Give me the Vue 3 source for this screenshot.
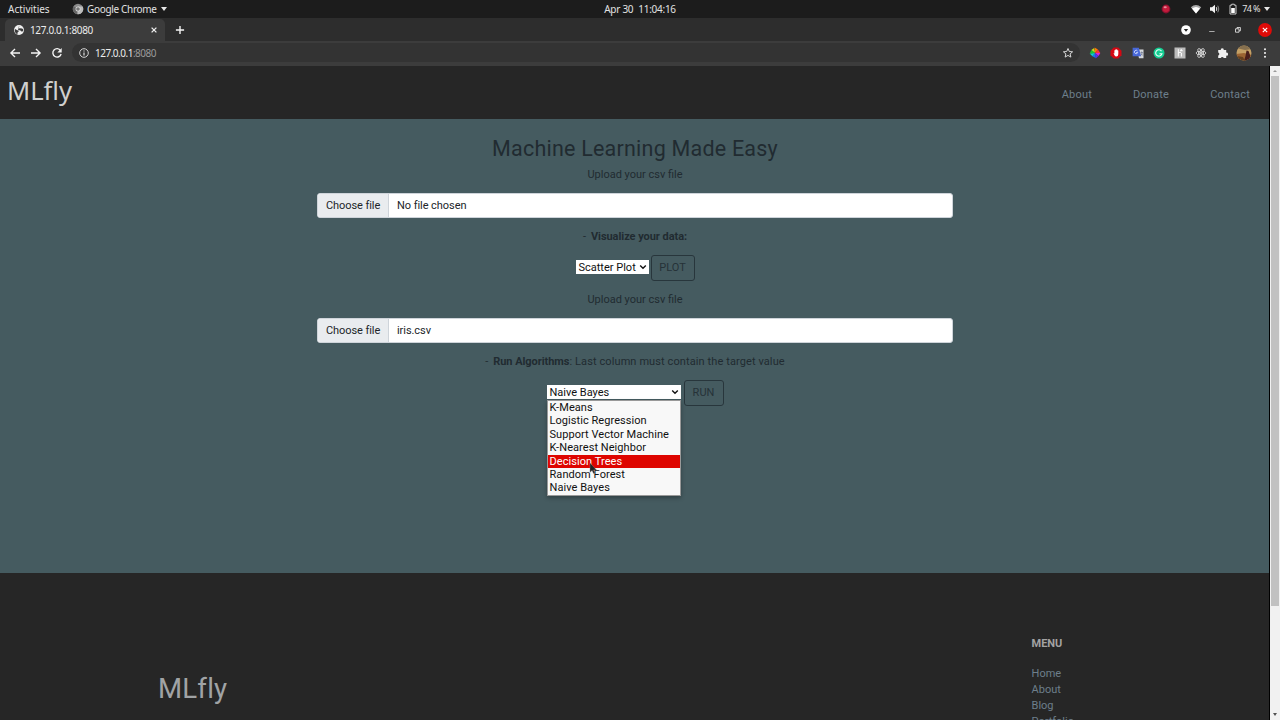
<script setup>
import {ref} from "vue"

const navLinks = ["About", "Donate", "Contact"]
const menuLinks = ["Home", "About", "Blog", "Portfolio"]

const algorithms = [
  "K-Means",
  "Logistic Regression",
  "Support Vector Machine",
  "K-Nearest Neighbor",
  "Decision Trees",
  "Random Forest",
  "Naive Bayes",
]

const selected = ref("Naive Bayes")
const hovered = ref("Decision Trees")
</script>

<template>
  <div class="desktop">
    <header class="topbar">
      <div class="topbar__left">
        <span class="topbar__activities">Activities</span>
        <svg class="topbar__chrome" viewBox="0 0 12 12">
          <circle cx="6" cy="6" r="5.2" fill="#8b8b8b"/>
          <path d="M6 6L1.5 3.3A5.2 5.2 0 0 0 5 11.1z" fill="#666"/>
          <path d="M6 3.5h4.6A5.2 5.2 0 0 1 5.5 11.2z" fill="#bcbcbc"/>
          <circle cx="6" cy="6" r="2.5" fill="#ddd"/>
          <circle cx="6" cy="6" r="1.8" fill="#777"/>
        </svg>
        <span class="topbar__app">Google Chrome</span>
        <i class="caret"></i>
      </div>
      <div class="topbar__clock"><span>Apr 30</span><span>11:04:16</span></div>
      <div class="topbar__right">
        <svg class="topbar__record" viewBox="0 0 10 10">
          <circle cx="5" cy="5" r="4.4" fill="#8c1230"/>
          <circle cx="5" cy="4.8" r="3.2" fill="#c41c3c"/>
          <ellipse cx="4.2" cy="3.2" rx="1.6" ry="1" fill="#e58a98"/>
        </svg>
        <svg class="topbar__wifi" viewBox="0 0 12 10">
          <path d="M.8 3.2Q6-1 11.2 3.2L6 9.4z" fill="#aaa"/>
          <path d="M2 4.6Q6 1.6 10 4.6L6 9.4z" fill="#fff"/>
        </svg>
        <svg class="topbar__sound" viewBox="0 0 12 10">
          <path d="M1 3.2h2L6 .8v8.4L3 6.8H1z" fill="#f2f2f2"/>
          <path d="M7.3 3.2q1 1.8 0 3.6" fill="none" stroke="#eee" stroke-width="1"/>
          <path d="M8.8 1.7q2 3.3 0 6.6" fill="none" stroke="#999" stroke-width=".9"/>
        </svg>
        <svg class="topbar__battery" viewBox="0 0 8 12">
          <path d="M2.7 1.2h2.6v1H7v8.8H1V2.2h1.7z" fill="none" stroke="#ddd" stroke-width=".9"/>
          <path d="M2.2 5h3.6v5H2.2z" fill="#fff"/>
        </svg>
        <span class="topbar__percent">74 %</span>
        <i class="caret"></i>
      </div>
    </header>

    <div class="tabs">
      <div class="tab">
        <svg class="tab__globe" viewBox="0 0 12 12">
          <circle cx="6" cy="6" r="4.9" fill="#f1f1f1"/>
          <path d="M2 5l2.4 1.3 1.2.2v1.2L4.5 8.6v1.7C2.2 9.6 1.4 7.2 2 5z" fill="#3c3c3c"/>
          <path d="M6.3 2L5.4 3.3l1.2 1.2 1.4-.3 2 .9.1 2.1-1.7.3-1.3-1.3H5.8l-.9-1 1-1.2z" fill="#3c3c3c"/>
        </svg>
        <span class="tab__title">127.0.0.1:8080</span>
        <svg class="tab__close" viewBox="0 0 8 8"><path d="M1.6 1.6l4.8 4.8M6.4 1.6L1.6 6.4" stroke="#eee" stroke-width="1.3"/></svg>
      </div>
      <svg class="tabs__new" viewBox="0 0 10 10"><path d="M5 .9v8.2M.9 5h8.2" stroke="#f3f3f3" stroke-width="1.4"/></svg>
      <div class="window-buttons">
        <svg class="window-buttons__menu" viewBox="0 0 10 10">
          <circle cx="5" cy="5" r="4.8" fill="#fff"/>
          <path d="M2.8 3.9h4.4L5 6.7z" fill="#222"/>
        </svg>
        <svg class="window-buttons__min" viewBox="0 0 8 8"><path d="M1.2 5.5h5.4" stroke="#aaa" stroke-width="1"/></svg>
        <svg class="window-buttons__max" viewBox="0 0 8 8">
          <path d="M1.5 2.8h3.5v3.4H1.5zM3 2.8V1.5h3.4v3.3H5" fill="none" stroke="#ddd" stroke-width=".9"/>
        </svg>
        <svg class="window-buttons__close" viewBox="0 0 14 14">
          <circle cx="7" cy="7" r="6.9" fill="#e00b08"/>
          <path d="M4.8 4.8l4.4 4.4M9.2 4.8L4.8 9.2" stroke="#fff" stroke-width="1.1"/>
        </svg>
      </div>
    </div>

    <div class="toolbar">
      <svg class="toolbar__nav" viewBox="0 0 12 12"><path d="M11 6H2M6 1.9L1.9 6 6 10.1" fill="none" stroke="#f3f3f3" stroke-width="1.35"/></svg>
      <svg class="toolbar__nav" viewBox="0 0 12 12"><path d="M1 6h9M6 1.9L10.1 6 6 10.1" fill="none" stroke="#f3f3f3" stroke-width="1.35"/></svg>
      <svg class="toolbar__nav" viewBox="0 0 12 12">
        <path d="M9.6 3.6A4.2 4.2 0 1 0 10.1 7" fill="none" stroke="#f3f3f3" stroke-width="1.4"/>
        <path d="M10.7 1v4.4H6.3z" fill="#f3f3f3"/>
      </svg>
      <div class="address">
        <svg class="address__info" viewBox="0 0 10 10">
          <circle cx="5" cy="5" r="4.3" fill="none" stroke="#ddd" stroke-width=".95"/>
          <path d="M5 4.5v3M5 2.5v1.1" stroke="#eee" stroke-width="1.1"/>
        </svg>
        <span class="address__url">127.0.0.1<span class="address__port">:8080</span></span>
        <svg class="address__star" viewBox="0 0 12 12">
          <path d="M6 1.5l1.3 3 3.3.3-2.5 2.1.8 3.2L6 8.4l-2.9 1.7.8-3.2-2.5-2.1 3.3-.3z" fill="none" stroke="#ddd" stroke-width=".95"/>
        </svg>
      </div>
      <div class="extensions">
        <svg viewBox="0 0 12 12">
          <path d="M6 6L5.2 1 2.4 2.9z" fill="#c8e020"/>
          <path d="M6 6L5.6.6l3.3 2z" fill="#ff7a00"/>
          <path d="M6 6l2.9-3.6L11.3 6z" fill="#f33"/>
          <path d="M6 6h5.3L9.5 9z" fill="#d523dc"/>
          <path d="M6 6l3.5 3L6.7 11.4z" fill="#5732ee"/>
          <path d="M6 6l.7 5L3.4 9.3z" fill="#1774f5"/>
          <path d="M6 6L3.4 9.3.7 6.4z" fill="#0bd3cf"/>
          <path d="M6 6L.7 6.4l1.7-3.5z" fill="#19c733"/>
        </svg>
        <svg viewBox="0 0 12 12">
          <path d="M3.7.5h4.6l3.2 3.2v4.6l-3.2 3.2H3.7L.5 8.3V3.7z" fill="#d40813"/>
          <path d="M3.5 6.1l.9.4V3.2h.8V2.5H6v-.3h.8v.6h.8v.7h.7v3.7Q8.2 9.4 6.4 9.5 5 9.5 4.3 8z" fill="#fff"/>
        </svg>
        <svg viewBox="0 0 12 12">
          <path d="M5 2.6h6.5v8.7H7z" fill="#d5d8dc"/>
          <path d="M.6.8h6.2l2.3 8.5H.6z" fill="#4767d8"/>
          <path d="M5.5 4a1.7 1.7 0 1 0 .2 1.5H4.2" fill="none" stroke="#d7e1ff" stroke-width=".85"/>
          <path d="M8.5 5.5h2.3M9.6 4.5v1M10.3 5.6Q9.9 7.8 8.7 8.6M9 6.5l1.7 2" fill="none" stroke="#5c6782" stroke-width=".6"/>
        </svg>
        <svg viewBox="0 0 12 12">
          <circle cx="6" cy="6" r="5.5" fill="#13ce92"/>
          <path d="M8.5 4.1A3.2 3.2 0 1 0 9 6.7H6.4" fill="none" stroke="#eafff8" stroke-width="1.1"/>
        </svg>
        <svg viewBox="0 0 12 12">
          <path d="M.5.5h11v11H.5z" fill="#bcbcbc"/>
          <path d="M4.3 2.2v7.3M4.3 6Q6.3 4.4 7.4 6v3.5M7.2 2v2M5.9 3.7h2.8" fill="none" stroke="#fff" stroke-width="1"/>
        </svg>
        <svg viewBox="0 0 12 12">
          <g fill="none" stroke="#ddd" stroke-width=".85">
            <ellipse cx="6" cy="6" rx="5" ry="1.9"/>
            <ellipse cx="6" cy="6" rx="5" ry="1.9" transform="rotate(60 6 6)"/>
            <ellipse cx="6" cy="6" rx="5" ry="1.9" transform="rotate(120 6 6)"/>
          </g>
          <circle cx="6" cy="6" r="1" fill="#eee"/>
        </svg>
        <svg viewBox="0 0 12 12">
          <path d="M1.2 3.1h2.6a1.5 1.5 0 1 1 2.9 0h2.5v2.6a1.5 1.5 0 1 1 0 2.9v2.5H6.7a1.5 1.5 0 0 0-2.9 0H1.2V8.5a1.5 1.5 0 0 0 0-2.9z" fill="#f1f1f1"/>
        </svg>
      </div>
      <svg class="toolbar__avatar" viewBox="0 0 16 16">
        <defs><clipPath id="face"><circle cx="8" cy="8" r="7.5"/></clipPath></defs>
        <g clip-path="url(#face)">
          <path d="M0 0h16v16H0z" fill="#c4a065"/>
          <path d="M0 0h16v4L9 5 0 3z" fill="#86704f"/>
          <path d="M0 9l8-1 8 2v6H0z" fill="#9c6432"/>
          <path d="M10.5 5.5l2 .5 1.5 4 1 6H8l1.5-5z" fill="#4a1f1b"/>
          <path d="M1 11l6 1 2 4H2z" fill="#65401f"/>
        </g>
      </svg>
      <svg class="toolbar__more" viewBox="0 0 4 12">
        <circle cx="2" cy="2.2" r="1.05" fill="#eee"/>
        <circle cx="2" cy="6" r="1.05" fill="#eee"/>
        <circle cx="2" cy="9.8" r="1.05" fill="#eee"/>
      </svg>
    </div>

    <div class="viewport">
      <div class="page">
        <nav class="navbar">
          <a class="navbar__brand">MLfly</a>
          <ul class="navbar__links">
            <li v-for="link in navLinks" :key="link">{{ link }}</li>
          </ul>
        </nav>

        <main class="main">
          <h2 class="main__title">Machine Learning Made Easy</h2>
          <p class="main__upload">Upload your csv file</p>
          <div class="file">
            <span class="file__button">Choose file</span>
            <span class="file__name">No file chosen</span>
          </div>
          <p class="main__hint">- <b>Visualize your data:</b></p>
          <div class="action">
            <div class="select select--plot">
              <span>Scatter Plot</span>
              <svg viewBox="0 0 8 6"><path d="M1.2 1.5L4 4.2l2.8-2.7" fill="none" stroke="#111" stroke-width="1.4"/></svg>
            </div>
            <button class="btn btn--plot">PLOT</button>
          </div>

          <p class="main__upload">Upload your csv file</p>
          <div class="file">
            <span class="file__button">Choose file</span>
            <span class="file__name">iris.csv</span>
          </div>
          <p class="main__hint">- <b>Run Algorithms</b>: Last column must contain the target value</p>
          <div class="action">
            <div class="select select--run">
              <span>{{ selected }}</span>
              <svg viewBox="0 0 8 6"><path d="M1.2 1.5L4 4.2l2.8-2.7" fill="none" stroke="#111" stroke-width="1.4"/></svg>
              <ul class="options">
                <li
                  v-for="item in algorithms"
                  :key="item"
                  :class="{'options__item--active': item === hovered}"
                  class="options__item"
                  @mouseenter="hovered = item"
                  @click="selected = item"
                >{{ item }}</li>
              </ul>
              <svg class="cursor" viewBox="0 0 9 13">
                <path d="M1 1v9.3l2.1-1.9 1.4 3.2 1.5-.7-1.4-3h2.9z" fill="#222" stroke="#888" stroke-width=".4"/>
              </svg>
            </div>
            <button class="btn btn--run">RUN</button>
          </div>
        </main>

        <footer class="footer">
          <div class="footer__brand">MLfly</div>
          <div class="footer__menu">
            <h6>MENU</h6>
            <ul>
              <li v-for="link in menuLinks" :key="link">{{ link }}</li>
            </ul>
          </div>
        </footer>
      </div>

      <div class="scrollbar">
        <i class="scrollbar__up"></i>
        <div class="scrollbar__thumb"></div>
        <i class="scrollbar__down"></i>
      </div>
    </div>
  </div>
</template>

<style>
body {
  margin: 0;
  overflow: hidden;
}
</style>

<style scoped>
* {
  box-sizing: border-box;
}

svg {
  display: block;
  flex: none;
}

ul, p, h2, h6 {
  margin: 0;
  padding: 0;
  list-style: none;
}

.desktop {
  display: flex;
  flex-direction: column;
  width: 1280px;
  height: 720px;
  overflow: hidden;
  background: #262626;
  font-family: Roboto, "Liberation Sans", sans-serif;
  font-size: 11px;
  line-height: 16px;
  white-space: nowrap;
}

.topbar {
  display: grid;
  grid-template-columns: 1fr auto 1fr;
  align-items: center;
  flex: none;
  height: 18px;
  padding: 0 10px 0 8px;
  background: #1c1c1c;
  color: #e2e2e2;
  font-family: "Noto Sans", sans-serif;
  font-size: 10px;
}

.topbar__left, .topbar__right, .topbar__clock {
  display: flex;
  align-items: center;
}

.topbar__right {
  justify-content: flex-end;
}

.topbar__clock {
  gap: 5px;
  padding-left: 2px;
  letter-spacing: -0.27px;
}

.topbar__activities {
  width: 64px;
}

.topbar__chrome {
  width: 12px;
  height: 12px;
  margin-right: 3px;
}

.topbar__app {
  letter-spacing: -0.33px;
}

.topbar__record {
  width: 10px;
  height: 10px;
  margin-right: 19px;
}

.topbar__wifi {
  width: 12px;
  height: 10px;
  margin-right: 7px;
}

.topbar__sound {
  width: 12px;
  height: 10px;
  margin-right: 8px;
}

.topbar__battery {
  width: 8px;
  height: 12px;
  margin-right: 5px;
}

.topbar__percent {
  font-size: 9px;
  letter-spacing: -0.6px;
}

.caret {
  margin-left: 4px;
  border: 3px solid transparent;
  border-top: 4px solid #e8e8e8;
  border-bottom: 0;
}

.tabs {
  display: flex;
  align-items: center;
  flex: none;
  height: 23px;
  padding: 0 8px 0 5px;
  background: #2d2d2d;
}

.tab {
  display: flex;
  align-items: center;
  align-self: flex-end;
  width: 160px;
  height: 22px;
  padding: 0 7px 1px 8px;
  border-radius: 5px 5px 0 0;
  background: #3c3c3c;
  color: #ececec;
  font-family: "Noto Sans", sans-serif;
  font-size: 10px;
}

.tab__globe {
  width: 12px;
  height: 12px;
  margin-right: 5px;
}

.tab__title {
  letter-spacing: -0.36px;
}

.tab__close {
  width: 8px;
  height: 8px;
  margin-left: auto;
}

.tabs__new {
  width: 10px;
  height: 10px;
  margin-left: 10px;
}

.window-buttons {
  display: flex;
  align-items: center;
  margin-left: auto;
}

.window-buttons__menu {
  width: 10px;
  height: 10px;
  margin-right: 17px;
}

.window-buttons__min, .window-buttons__max {
  width: 8px;
  height: 8px;
}

.window-buttons__min {
  margin-right: 18px;
}

.window-buttons__max {
  margin-right: 16px;
}

.window-buttons__close {
  width: 14px;
  height: 14px;
}

.toolbar {
  display: flex;
  align-items: center;
  flex: none;
  height: 25px;
  padding: 0 13px 2px 9px;
  background: #3c3c3c;
}

.toolbar__nav {
  width: 12px;
  height: 12px;
  margin-right: 9px;
}

.address {
  display: flex;
  align-items: center;
  width: 1008px;
  height: 19px;
  padding: 0 6px 0 7px;
  border-radius: 10px;
  background: #333;
  color: #ececec;
  font-family: "Noto Sans", sans-serif;
  font-size: 10px;
}

.address__info {
  width: 10px;
  height: 10px;
  margin-right: 6px;
}

.address__url {
  letter-spacing: -0.5px;
}

.address__port {
  color: #9a9a9a;
}

.address__star {
  width: 12px;
  height: 12px;
  margin-left: auto;
}

.extensions {
  display: flex;
  gap: 9.3px;
  margin-left: 9px;
}

.extensions svg {
  width: 12px;
  height: 12px;
}

.toolbar__avatar {
  width: 16px;
  height: 16px;
  margin-left: 7px;
}

.toolbar__more {
  width: 4px;
  height: 12px;
  margin-left: auto;
}

.viewport {
  display: flex;
  flex: 1;
  min-height: 0;
}

.page {
  display: flex;
  flex-direction: column;
  width: 1270px;
  overflow: hidden;
}

.navbar {
  display: flex;
  align-items: center;
  justify-content: space-between;
  flex: none;
  height: 53px;
  padding: 0 20px 0 7px;
  background: #262626;
}

.navbar__brand {
  padding-bottom: 4px;
  color: #d0d0ce;
  font-family: "Noto Sans", sans-serif;
  font-size: 25.6px;
}

.navbar__links {
  display: flex;
  gap: 41px;
  padding-top: 4px;
  color: #6d7f8b;
  letter-spacing: 0.2px;
}

.main {
  display: flex;
  flex-direction: column;
  align-items: center;
  flex: none;
  height: 454px;
  padding-top: 17px;
  background: #455b60;
  color: #212b31;
}

.main__title {
  font-size: 21.5px;
  font-weight: 400;
  line-height: 25px;
  letter-spacing: 0.22px;
}

.main__upload {
  margin-top: 5px;
  line-height: 18px;
}

.action + .main__upload {
  margin-top: 10px;
}

.file {
  display: flex;
  width: 636px;
  height: 25px;
  margin-top: 9px;
  overflow: hidden;
  border: 1px solid #ced4da;
  border-radius: 3px;
  background: #fff;
  color: #212529;
  line-height: 23px;
}

.file__button {
  width: 71px;
  padding-left: 8px;
  border-right: 1px solid #ced4da;
  background: #e9ecef;
  letter-spacing: -0.08px;
}

.file__name {
  padding-left: 8px;
  letter-spacing: -0.06px;
}

.main__hint {
  margin-top: 11px;
  letter-spacing: 0.1px;
}

.main__hint b {
  margin-left: 2px;
  font-weight: 700;
  letter-spacing: -0.05px;
}

.action {
  display: flex;
  align-items: center;
  height: 26px;
  margin-top: 10px;
}

.select {
  position: relative;
  display: flex;
  align-items: center;
  justify-content: space-between;
  height: 14px;
  padding: 0 2px 0 3px;
  margin-bottom: 2px;
  background: #fff;
  color: #111;
  line-height: 15px;
}

.select svg {
  width: 8px;
  height: 6px;
}

.select--plot {
  width: 73px;
  margin-right: 2px;
}

.select--run {
  width: 134px;
  margin-right: 3px;
}

.options {
  position: absolute;
  top: 15px;
  left: 0;
  width: 134px;
  border: 1px solid #999;
  background: #f8f8f8;
  box-shadow: 0 2px 4px rgba(0, 0, 0, 0.3);
}

.options__item {
  height: 13.4px;
  padding-left: 2px;
  line-height: 13.4px;
  letter-spacing: 0.06px;
}

.options__item--active {
  background: #de0500;
  color: #fff;
}

.select .cursor {
  position: absolute;
  top: 77px;
  left: 42px;
  width: 9px;
  height: 13px;
}

.btn {
  height: 26px;
  padding: 0;
  border: 1px solid #28363c;
  border-radius: 3px;
  background: transparent;
  color: #263238;
  font: inherit;
}

.btn--plot {
  width: 44px;
}

.btn--run {
  width: 40px;
}

.footer {
  display: flex;
  justify-content: space-between;
  flex: 1;
  min-height: 0;
  padding: 63px 196px 0 158px;
  background: #262626;
}

.footer__brand {
  padding-top: 37px;
  color: #a0a3a5;
  font-size: 27.6px;
  line-height: 32px;
  letter-spacing: 0.2px;
}

.footer__menu {
  color: #6d7f8b;
}

.footer__menu h6 {
  margin-bottom: 14px;
  color: #a3a3a3;
  font-size: 11px;
  font-weight: 700;
}

.scrollbar {
  position: relative;
  display: flex;
  flex-direction: column;
  align-items: center;
  width: 10px;
  background: #f1f1f1;
  box-shadow: -1px 0 #000;
}

.scrollbar__up, .scrollbar__down {
  border: 2px solid transparent;
}

.scrollbar__up {
  margin: 4px 0;
  border-top: 0;
  border-bottom: 2px solid #999;
}

.scrollbar__down {
  margin: auto 0 4px;
  border-top: 3px solid #505050;
  border-bottom: 0;
}

.scrollbar__thumb {
  width: 8px;
  height: 530px;
  background: #c1c1c1;
}
</style>
